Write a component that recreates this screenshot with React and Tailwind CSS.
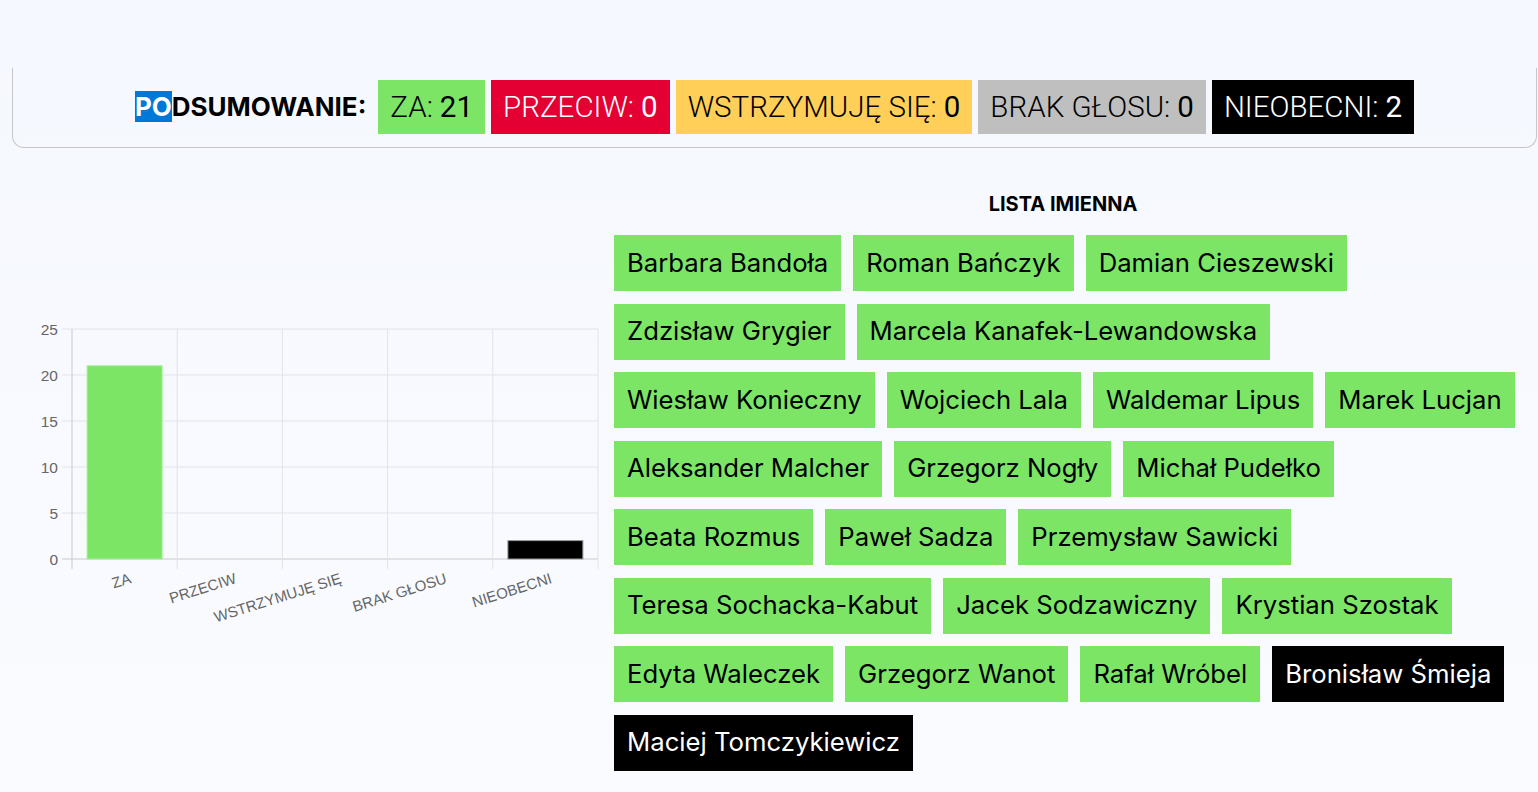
import React from 'react';

const summary = [
  { label: 'ZA', value: 21, cls: 'bg-[#7ce565] text-black' },
  { label: 'PRZECIW', value: 0, cls: 'bg-[#e40032] text-white' },
  { label: 'WSTRZYMUJĘ SIĘ', value: 0, cls: 'bg-[#ffcf57] text-black' },
  { label: 'BRAK GŁOSU', value: 0, cls: 'bg-[#bfbfbf] text-black' },
  { label: 'NIEOBECNI', value: 2, cls: 'bg-black text-white' },
];

const people = [
  ['Barbara Bandoła', 'za'],
  ['Roman Bańczyk', 'za'],
  ['Damian Cieszewski', 'za'],
  ['Zdzisław Grygier', 'za'],
  ['Marcela Kanafek-Lewandowska', 'za'],
  ['Wiesław Konieczny', 'za'],
  ['Wojciech Lala', 'za'],
  ['Waldemar Lipus', 'za'],
  ['Marek Lucjan', 'za'],
  ['Aleksander Malcher', 'za'],
  ['Grzegorz Nogły', 'za'],
  ['Michał Pudełko', 'za'],
  ['Beata Rozmus', 'za'],
  ['Paweł Sadza', 'za'],
  ['Przemysław Sawicki', 'za'],
  ['Teresa Sochacka-Kabut', 'za'],
  ['Jacek Sodzawiczny', 'za'],
  ['Krystian Szostak', 'za'],
  ['Edyta Waleczek', 'za'],
  ['Grzegorz Wanot', 'za'],
  ['Rafał Wróbel', 'za'],
  ['Bronisław Śmieja', 'nieobecny'],
  ['Maciej Tomczykiewicz', 'nieobecny'],
];

// chart geometry (page coordinates, viewBox starts at y=300)
const plotLeft = 72;
const plotRight = 598;
const yZero = 558;
const perUnit = 9.2;
const categories = [
  { name: 'ZA', value: 21, fill: '#7ce565', stroke: '#a6ef96' },
  { name: 'PRZECIW', value: 0 },
  { name: 'WSTRZYMUJĘ SIĘ', value: 0 },
  { name: 'BRAK GŁOSU', value: 0 },
  { name: 'NIEOBECNI', value: 2, fill: '#000000', stroke: '#9a9a9a' },
];

const VoteChart = () => {
  const step = (plotRight - plotLeft) / categories.length;
  const ticks = [0, 5, 10, 15, 20, 25];
  return (
    <svg width="602" height="340" viewBox="0 300 602 340" className="block">
      {ticks.map((t) => {
        const y = yZero - t * perUnit;
        return (
          <g key={t}>
            <line x1={62} x2={plotRight} y1={y} y2={y} stroke={t === 0 ? '#c9c9cc' : '#e3e3e8'} strokeWidth="1" />
            <text x={58} y={y + 5.5} textAnchor="end" fontSize="15.5" fill="#666" fontFamily="'Liberation Sans', Arial, sans-serif">
              {t}
            </text>
          </g>
        );
      })}
      {Array.from({ length: categories.length + 1 }).map((_, i) => {
        const x = plotLeft + i * step;
        return <line key={i} x1={x} x2={x} y1={328} y2={568} stroke={i === 0 ? '#c9c9cc' : '#e3e3e8'} strokeWidth="1" />;
      })}
      {categories.map((c, i) => {
        const cx = plotLeft + step * (i + 0.5);
        const h = c.value * perUnit;
        return (
          <g key={c.name}>
            {c.value > 0 && (
              <rect x={cx - 37.5} y={yZero - h} width={75} height={h} fill={c.fill} stroke={c.stroke} strokeWidth="1" />
            )}
            <text
              x={cx + 4}
              y={571}
              transform={`rotate(-17.5 ${cx + 4} 571)`}
              textAnchor="end"
              dominantBaseline="hanging"
              fontSize="15"
              fill="#666"
              fontFamily="'Liberation Sans', Arial, sans-serif"
            >
              {c.name}
            </text>
          </g>
        );
      })}
    </svg>
  );
};

export default function App() {
  return (
    <div className="min-h-screen bg-gradient-to-b from-[#f5f8fe] to-[#fafbff] font-['Inter',sans-serif] text-black">
      <div className="h-[68px]" />
      <div className="ml-3 mr-px border-x border-b border-[#c6c6ca] rounded-b-xl pt-3 pb-[13px] flex items-center justify-center">
        <span className="text-[26px] font-bold mr-3 leading-none">
          <span className="bg-[#0078d7] text-white">PO</span>DSUMOWANIE:
        </span>
        <div className="flex gap-[6px] font-['Roboto',sans-serif] text-[29.5px]">
          {summary.map((s) => (
            <div key={s.label} className={`h-[54px] px-3 flex items-center ${s.cls}`}>
              <span className="font-light">{s.label}:</span>
              <span className="font-normal ml-[7px]">{s.value}</span>
            </div>
          ))}
        </div>
      </div>

      <div className="flex pt-[44px]">
        <div className="w-[614px] shrink-0">
          <div className="mt-[109px]">
            <VoteChart />
          </div>
        </div>
        <div className="w-[906px]">
          <h2 className="text-center text-[20px] font-bold leading-6 mb-[19px] pr-2">LISTA IMIENNA</h2>
          <div className="flex flex-wrap gap-x-3 gap-y-[12.5px]">
            {people.map(([name, vote]) => (
              <div
                key={name}
                className={`h-14 px-[13px] flex items-center text-[25.7px] ${vote === 'za' ? 'bg-[#7ce565] text-black' : 'bg-black text-white'}`}
              >
                {name}
              </div>
            ))}
          </div>
        </div>
      </div>
    </div>
  );
}
